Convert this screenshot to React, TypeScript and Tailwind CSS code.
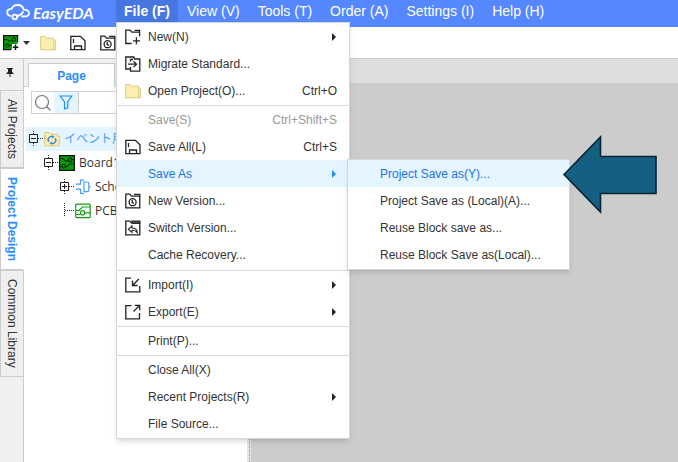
import { useState, type ReactNode } from "react";

type MenuEntry = {
  label: string;
  icon?: ReactNode;
  shortcut?: string;
  disabled?: boolean;
  submenu?: boolean;
};

const line = { fill: "none", stroke: "#222", strokeWidth: 1.3 };

function FolderIcon() {
  return (
    <svg width="16" height="16" viewBox="0 0 16 16" className="shrink-0">
      <path d="M.7 1.5H5l1.5 1.7h7V5h1.8v9.8H.7z" fill="#faefb0" stroke="#dcc878" />
      <path d="M13.5 4v10.5" stroke="#e6d68c" fill="none" />
    </svg>
  );
}

function SaveIcon() {
  return (
    <svg width="16" height="16" viewBox="0 0 16 16" className="shrink-0" {...line}>
      <path d="M.8 1.3h9.600l4.600 4.400v9H.8zM3.500 4v4M4.500 14.500v-3.500h7v3.500" />
    </svg>
  );
}

function NewIcon() {
  return (
    <svg width="16" height="16" viewBox="0 0 16 16" className="shrink-0" {...line}>
      <path d="M6.5 14.5H.8V1.2h4.4l1.6 2h7.8v4M14.6 3.2V1.4h-5M11.4 8.3v7M8 11.8h7" />
    </svg>
  );
}

function MigrateIcon() {
  return (
    <svg width="16" height="16" viewBox="0 0 16 16" className="shrink-0" {...line}>
      <path d="M9 3V1H.8v12h4M9 3h5.800v12.200H5.500V11M5.500 5.500V3.500H8M3 8.200h8M8.500 5.300l3 2.900-3 2.900" />
    </svg>
  );
}

function VersionIcon() {
  return (
    <svg width="16" height="16" viewBox="0 0 16 16" className="shrink-0" {...line}>
      <path d="M.8 14.8V1.2h4l1.6 2h8.4v11.6zM9 1.4h5.8v1.8" />
      <circle cx="7.6" cy="9.2" r="3.5" />
      <path d="M7.2 7v2.600l1.800.8" />
    </svg>
  );
}

function SwitchIcon() {
  return (
    <svg width="16" height="16" viewBox="0 0 16 16" className="shrink-0" {...line}>
      <path d="M.8 14.8V1.2h4l1.6 2h8.4v11.6z" />
      <path d="M7 1.2h7.8v2H8z" fill="#666" />
      <path d="M7 6L3.300 9.200 7 12.300v-2c2.500-.3 4 .7 5.300 2.500C12.200 10 10 8 7 8z" strokeWidth="1.1" />
    </svg>
  );
}

function ImportIcon() {
  return (
    <svg width="16" height="16" viewBox="0 0 16 16" className="shrink-0" {...line}>
      <path d="M6 1.200H.8v13.600h14V9M13.800 2L8 8M7.500 3.500v5h5" />
    </svg>
  );
}

function ExportIcon() {
  return (
    <svg width="16" height="16" viewBox="0 0 16 16" className="shrink-0" {...line}>
      <path d="M6.500 1.700H.8v13.100h13.700V9M8.500 7.500l5.800-5.800M9.800 1.300h4.900v4.900" />
    </svg>
  );
}

function BoardIcon() {
  return (
    <svg width="16" height="16" viewBox="0 0 16 16" className="shrink-0">
      <path d="M.6.6h14.8v14.8H.6z" fill="#0a9a0a" stroke="#111" strokeWidth="1.200" />
      <path d="M1 3.500h3L6.500 6H10M1 11.500h2M6.500 11.500h2l2-2.500H15M12.500 4.500H15" fill="none" stroke="#022d02" strokeWidth="1.200" />
      <circle cx="11.200" cy="5" r="1.800" fill="none" stroke="#022d02" strokeWidth="1.200" />
      <circle cx="4.800" cy="11.200" r="1.800" fill="none" stroke="#022d02" strokeWidth="1.200" />
    </svg>
  );
}

function NewBoardIcon() {
  return (
    <svg width="16" height="16" viewBox="0 0 16 16" className="shrink-0">
      <path d="M.6.600h14v14H.6z" fill="#0a9a0a" />
      <path d="M14.600 7V.6H.6v14H8" fill="none" stroke="#111" strokeWidth="1.200" />
      <path d="M1 4.500h3l2 1.500h4M6 10.500h2l2-2" fill="none" stroke="#022d02" />
      <circle cx="11" cy="4.500" r="1.700" fill="none" stroke="#022d02" />
      <circle cx="4.500" cy="10.500" r="1.700" fill="none" stroke="#022d02" />
      <path d="M9 9h7v7H9z" fill="#fff" />
      <path d="M12.500 9.500v5.500M9.800 12.200h5.500" stroke="#111" strokeWidth="1.500" />
    </svg>
  );
}

function ProjectIcon() {
  return (
    <svg width="16" height="16" viewBox="0 0 16 16" className="shrink-0">
      <path d="M.7 1.500H5l1.500 1.700h7V5h1.800v9.800H.7z" fill="#faefb0" stroke="#dcc878" />
      <path d="M5 10.800A3.200 3.200 0 0 1 8.500 5.700M11 7.200a3.200 3.200 0 0 1-3.500 5.100" fill="none" stroke="#4a86e8" strokeWidth="1.500" />
      <path d="M8 3.800l2.500 2L8 7.500zM8 10.500v3.600L5.500 12.300z" fill="#4a86e8" />
    </svg>
  );
}

function SchematicIcon() {
  return (
    <svg width="16" height="16" viewBox="0 0 16 16" className="shrink-0" fill="none" stroke="#4a9bf5" strokeWidth="1.200">
      <path d="M5.500 3.500V1.200H9M5.500 12v2.300H9M9 3h3.500c.8 0 1.300.5 1.300 1.300v7c0 .8-.5 1.300-1.300 1.300H9zM5.500 1.200v4H1M5.500 14.200v-4H1M14 8h2" />
    </svg>
  );
}

function PcbIcon() {
  return (
    <svg width="16" height="16" viewBox="0 0 16 16" className="shrink-0" fill="none" stroke="#12a012" strokeWidth="1.200">
      <rect x=".7" y="1.200" width="14.500" height="13.500" rx="1" />
      <path d="M1 7.500h3L7.500 4H15M1 11.500h4M10 9.800h5" />
      <circle cx="7.500" cy="9.800" r="2.200" />
    </svg>
  );
}

function Expander({ open }: { open: boolean }) {
  return (
    <svg width="14" height="16" viewBox="0 0 14 16" className="shrink-0" fill="none" stroke="#222">
      <path d={open ? "M.5 3.500h8v8h-8zM2 7.500h5" : "M.5 3.500h8v8h-8zM2 7.500h5M4.500 5v5"} />
      <path d="M4.500 0v3M4.500 12v4M9 7.500h5" strokeDasharray="1 1" />
    </svg>
  );
}

const fileMenu: { className: string; items: MenuEntry[] }[] = [
  {
    className: "pb-px",
    items: [
      { label: "New(N)", icon: <NewIcon />, submenu: true },
      { label: "Migrate Standard...", icon: <MigrateIcon /> },
      { label: "Open Project(O)...", icon: <FolderIcon />, shortcut: "Ctrl+O" },
    ],
  },
  {
    className: "pb-0.5",
    items: [
      { label: "Save(S)", shortcut: "Ctrl+Shift+S", disabled: true },
      { label: "Save All(L)", icon: <SaveIcon />, shortcut: "Ctrl+S" },
      { label: "Save As", submenu: true },
      { label: "New Version...", icon: <VersionIcon /> },
      { label: "Switch Version...", icon: <SwitchIcon /> },
      { label: "Cache Recovery..." },
    ],
  },
  {
    className: "pb-px",
    items: [
      { label: "Import(I)", icon: <ImportIcon />, submenu: true },
      { label: "Export(E)", icon: <ExportIcon />, submenu: true },
    ],
  },
  { className: "pb-px", items: [{ label: "Print(P)..." }] },
  {
    className: "pb-px",
    items: [
      { label: "Close All(X)" },
      { label: "Recent Projects(R)", submenu: true },
      { label: "File Source..." },
    ],
  },
];

const saveAsMenu = [
  "Project Save as(Y)...",
  "Project Save as (Local)(A)...",
  "Reuse Block save as...",
  "Reuse Block Save as(Local)...",
];

const menus = ["View (V)", "Tools (T)", "Order (A)", "Settings (I)", "Help (H)"];
const sideTabs = ["All Projects", "Project Design", "Common Library"];

function SaveAsMenu() {
  const [active, setActive] = useState(saveAsMenu[0]);
  return (
    <div className="absolute left-[230px] -top-px z-20 w-[223px] border border-[#d6d6d6] bg-white pb-px shadow-md">
      {saveAsMenu.map((label) => (
        <button
          key={label}
          onMouseEnter={() => setActive(label)}
          className={`flex h-[27px] w-full items-center pl-8 text-left whitespace-nowrap ${active === label ? "bg-[#e5f5ff] text-[#1a73e8]" : "text-[#333]"}`}
        >
          {label}
        </button>
      ))}
    </div>
  );
}

function FileMenu() {
  return (
    <div className="absolute top-[22px] left-0 z-10 w-[234px] border border-[#d6d6d6] bg-white text-xs text-[#333] shadow-md">
      {fileMenu.map((section, i) => (
        <div key={i} className={`${section.className} ${i > 0 ? "border-t border-[#d9d9d9]" : ""}`}>
          {section.items.map((item) => {
            const active = item.label === "Save As";
            const color = item.disabled ? "text-[#999]" : active ? "bg-[#e5f5ff] text-[#1a73e8]" : "";
            return (
              <div key={item.label} className="relative">
                <button disabled={item.disabled} className={`flex h-[27px] w-full items-center pr-3 pl-2 text-left ${color}`}>
                  <span className="mr-[7px] flex w-4 shrink-0">{item.icon}</span>
                  <span className="flex-1 whitespace-nowrap">{item.label}</span>
                  {item.shortcut && <span>{item.shortcut}</span>}
                  {item.submenu && (
                    <svg width="6" height="8" viewBox="0 0 6 8" className={active ? "fill-[#1a8cff]" : "fill-[#222]"}>
                      <path d="M1 0l4 4-4 4z" />
                    </svg>
                  )}
                </button>
                {active && <SaveAsMenu />}
              </div>
            );
          })}
        </div>
      ))}
    </div>
  );
}

function MenuBar() {
  return (
    <header className="flex h-[27px] shrink-0 bg-[#5588ff] text-sm text-white">
      <a href="#" className="flex w-[116px] shrink-0 items-center gap-0.5 pb-0.5 pl-1.5">
        <svg width="25" height="18" viewBox="0 0 25 18" fill="none" stroke="white" strokeWidth="1.800" strokeLinecap="round">
          <path d="M4.500 12C2.500 11.500 1.200 10.300 1.200 8.500c0-2.300 1.800-3.700 4.300-3.700C6.800 2 9 1 11.500 1c3.500 0 5.500 1.900 6.300 4.700 3-.1 5.200 1.200 5.200 3.600 0 2.200-1.800 3.200-4.300 3.200h-2.500" />
          <path d="M11.300 12c2.700-.3 4.500-1.800 5.700-4" />
          <circle cx="8.800" cy="13" r="2.300" />
        </svg>
        <span className="font-['Lato',sans-serif] text-base leading-5 font-bold italic">EasyEDA</span>
      </a>
      <div className="relative">
        <button className="h-[22px] w-[62px] bg-[#4676e0] font-bold">File (F)</button>
        <FileMenu />
      </div>
      <nav className="flex h-[22px]">
        {menus.map((m) => (
          <button key={m} className="px-[9px] whitespace-nowrap">{m}</button>
        ))}
      </nav>
    </header>
  );
}

function Toolbar() {
  return (
    <div className="flex h-[31px] shrink-0 items-center bg-white pl-[3px]">
      <button aria-label="New board" className="flex items-center gap-1">
        <NewBoardIcon />
        <svg width="7" height="4" viewBox="0 0 7 4"><path d="M0 0h7L3.500 4z" fill="#333" /></svg>
      </button>
      <button aria-label="Open" className="ml-2.5"><FolderIcon /></button>
      <button aria-label="Save" className="ml-3.5"><SaveIcon /></button>
      <button aria-label="New version" className="ml-3.5"><VersionIcon /></button>
    </div>
  );
}

function SideTabs() {
  return (
    <div className="flex w-6 shrink-0 flex-col border-r border-[#ccc] bg-[#f0f0f0]">
      <button aria-label="Pin" className="flex h-[31px] items-center justify-center pr-1 pb-1">
        <svg width="8" height="9" viewBox="0 0 8 9" fill="#222"><path d="M1 0h6v1H6v3l1.500 1v1h-3v3h-1V6h-3V5L2 4V1H1z" /></svg>
      </button>
      {sideTabs.map((tab) => {
        const active = tab === "Project Design";
        return (
          <button
            key={tab}
            className={`-mr-px flex items-center justify-center border border-[#ccc] px-2 text-xs [writing-mode:vertical-rl] ${active ? "border-r-white bg-white font-bold text-[#2b8cff]" : "bg-[#efefef] text-[#333]"}`}
          >
            {tab}
          </button>
        );
      })}
    </div>
  );
}

function ProjectPanel() {
  return (
    <aside className="flex w-[223px] shrink-0 flex-col bg-white text-xs">
      <div className="flex h-7 shrink-0 items-end border-b border-[#d6d6d6] bg-[#f0f0f0] pl-1">
        <button className="-mb-px h-6 w-[87px] border border-b-0 border-[#ccc] bg-white font-bold text-[#2b8cff]">Page</button>
      </div>
      <div className="mt-1 ml-[7px] flex h-[23px] shrink-0 border border-[#d0d0d0]">
        <button aria-label="Search" className="flex w-[22px] items-center justify-center">
          <svg width="18" height="18" viewBox="0 0 18 18" fill="none" stroke="#777" strokeWidth="1.200">
            <circle cx="8" cy="8" r="6.500" /><path d="M12.500 12.500l4 4" />
          </svg>
        </button>
        <button aria-label="Filter" className="flex w-[25px] items-center justify-center border-r border-[#d0d0d0] bg-[#e5f5ff]">
          <svg width="14" height="15" viewBox="0 0 14 15" fill="none" stroke="#1a8cff" strokeWidth="1.200">
            <path d="M1.200 1h11.600L8.700 7v5.800L5.500 14V7z" />
          </svg>
        </button>
        <input aria-label="Filter pages" className="min-w-0 flex-1 px-1 outline-none" />
      </div>
      <ul className="mt-[13px] ml-0.5 overflow-hidden font-['Open_Sans','Noto_Sans_CJK_JP',sans-serif] text-xs whitespace-nowrap text-[#333]">
        <li className="flex h-6 items-center bg-[#e5f5ff] pl-[3px] text-[#4a9bff]">
          <Expander open />
          <span className="mr-1 ml-px"><ProjectIcon /></span>イベント用
        </li>
        <li className="flex h-6 items-center pl-[18px]">
          <Expander open />
          <span className="mr-1 ml-px"><BoardIcon /></span>Board1
        </li>
        <li className="flex h-6 items-center pl-[34px]">
          <Expander open={false} />
          <span className="mr-1 ml-px"><SchematicIcon /></span>Schematic1
        </li>
        <li className="flex h-6 items-center pl-[34px]">
          <svg width="14" height="16" viewBox="0 0 14 16" fill="none" stroke="#222" strokeDasharray="1 1">
            <path d="M4.500 0v13M5 7.500h9" />
          </svg>
          <span className="mr-1 ml-px"><PcbIcon /></span>PCB1
        </li>
      </ul>
    </aside>
  );
}

export default function App() {
  return (
    <div className="relative flex h-screen flex-col overflow-hidden bg-white font-['Liberation_Sans',Arial,sans-serif]">
      <MenuBar />
      <Toolbar />
      <div className="flex min-h-0 flex-1 border-t border-[#ccc]">
        <SideTabs />
        <ProjectPanel />
        <div className="flex w-1 shrink-0 justify-center bg-[#e4e4e4]">
          <div className="border-l border-dotted border-[#999]" />
        </div>
        <main className="flex-1 bg-[#cccccc]">
          <div className="h-6 bg-[#dddddd]" />
        </main>
      </div>
      {/* Callout arrow pointing at the save command */}
      <svg width="96" height="80" viewBox="0 0 96 80" className="absolute top-[135px] left-[562px] z-30">
        <path d="M2 39.500L38.500 2v19.500h55.500v37H38.500V77z" fill="#156082" stroke="#042433" strokeWidth="1.600" />
      </svg>
    </div>
  );
}
